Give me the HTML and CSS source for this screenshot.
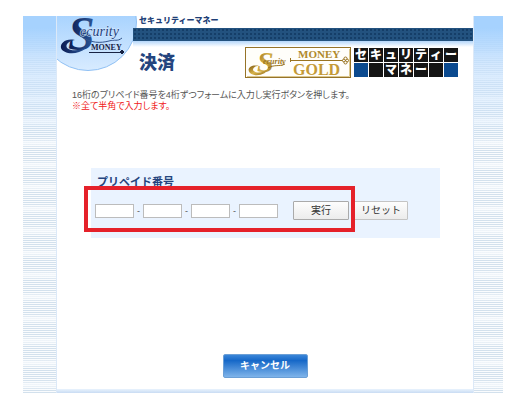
FILE: index.html
```html
<!DOCTYPE html>
<html lang="ja">
<head>
	<meta charset="UTF-8">
	<title>セキュリティーマネー 決済</title>
	<link rel="stylesheet" href="styles.css">
</head>
<body>
<div class="wrap">
	<div class="main">
		<div class="header">
			<svg class="logo" width="80" height="56" viewBox="0 0 80 56" role="img" aria-label="Security MONEY">
				<defs>
					<linearGradient id="disc" x1="0" y1="0" x2="0" y2="1">
						<stop offset="0.4" stop-color="#a6d2fe"/>
						<stop offset="1" stop-color="#d8ebff"/>
					</linearGradient>
					<linearGradient id="navy" x1="0" y1="0" x2="1" y2="0">
						<stop offset="0" stop-color="#0a1a52"/>
						<stop offset="1" stop-color="#2c5a9c"/>
					</linearGradient>
				</defs>
				<circle cx="31" cy="6" r="48.5" fill="url(#disc)" stroke="#8fc0f4"/>
				<text class="logo-s" x="11" y="34">S</text>
				<path d="M18 24C9 22 3 27 4 32C6 38 20 40 29 32C25 34 14 36 10 32C8 28 12 25 18 24Z" fill="url(#navy)"/>
				<path d="M22 19C34 28 44 27 52 25C58 23 60 26 65 22" fill="none" stroke="#33558c"/>
				<text class="logo-name" x="23" y="20">ecurity</text>
				<text class="logo-money" x="34" y="34">MONEY</text>
				<path d="M32 36.5H63" stroke="#182344"/>
				<path d="M63 36H67M65 34V38" stroke="#182344" stroke-width="2"/>
			</svg>
			<div class="head-body">
				<p class="site-name">セキュリティーマネー</p>
				<div class="bar"></div>
				<div class="head-row">
					<h1>決済</h1>
					<svg class="gold" width="106" height="31" viewBox="0 0 106 31" role="img" aria-label="Security MONEY GOLD">
						<defs>
							<linearGradient id="gold" x1="0" y1="0" x2="1" y2="1">
								<stop offset="0" stop-color="#805a10"/>
								<stop offset="0.5" stop-color="#d9b44a"/>
								<stop offset="1" stop-color="#8a6418"/>
							</linearGradient>
						</defs>
						<rect x="0.5" y="0.5" width="105" height="30" fill="#fffefa" stroke="#967328"/>
						<path d="M2 29.5H104.500V2" fill="none" stroke="#dcc88e"/>
						<text class="gold-s" x="12" y="25">S</text>
						<path d="M14 19C6 17 1 22 5 26C11 31 22 27 24 21C19 26 10 27 8 23C8 20 11 19 14 19Z" fill="url(#gold)"/>
						<text class="gold-name" x="18" y="17">ecurity</text>
						<path d="M23 21C30 17 34 20 40 17" fill="none" stroke="#9a7420"/>
						<text class="gold-money" x="53" y="11">MONEY</text>
						<text class="gold-big" x="48" y="28">GOLD</text>
						<path d="M45 13.5H98" stroke="#9a7420"/>
						<path d="M45.500 11V15" stroke="#9a7420"/>
						<circle cx="99" cy="13.5" r="1.5" fill="#fff" stroke="#9a7420"/>
						<circle cx="102" cy="13.5" r="1.5" fill="#fff" stroke="#9a7420"/>
						<circle cx="100.5" cy="11.5" r="1.5" fill="#fff" stroke="#9a7420"/>
						<circle cx="100.5" cy="15.5" r="1.5" fill="#fff" stroke="#9a7420"/>
					</svg>
					<div class="tiles">
						<span>セ</span><span>キ</span><span>ュ</span><span>リ</span><span>テ</span><span>ィ</span><span>ー</span>
						<span class="blue"></span><span></span><span>マ</span><span>ネ</span><span>ー</span><span></span><span class="blue"></span>
					</div>
				</div>
			</div>
		</div>
		<div class="lead">
			<p>16桁のプリペイド番号を4桁ずつフォームに入力し実行ボタンを押します。</p>
			<p class="red">※全て半角で入力します。</p>
		</div>
		<form class="panel">
			<h2>プリペイド番号</h2>
			<div class="fields">
				<input type="text" maxlength="4" aria-label="番号1"><span class="dash">-</span>
				<input type="text" maxlength="4" aria-label="番号2"><span class="dash">-</span>
				<input type="text" maxlength="4" aria-label="番号3"><span class="dash">-</span>
				<input type="text" maxlength="4" aria-label="番号4">
				<button type="button" class="btn run">実行</button>
				<button type="reset" class="btn">リセット</button>
			</div>
			<div class="frame"></div>
		</form>
		<div class="foot">
			<button type="button" class="cancel">キャンセル</button>
		</div>
	</div>
</div>
</body>
</html>
```

FILE: styles.css
```css
*{
	margin: 0;
	padding: 0;
	box-sizing: border-box;
}
body{
	background: #fff;
	font-family: "Liberation Sans", "Noto Sans CJK JP", sans-serif;
	font-size: 9px;
	color: #555;
}
.wrap{
	margin: 16px 16px 22px 23px;
	padding: 0 29px 0 33px;
	background:
		linear-gradient(#a6d2fe 0, #a6d2fe 12px, rgba(200,226,254,.7) 50px, rgba(255,255,255,0) 130px),
		repeating-linear-gradient(rgba(255,255,255,0) 0, rgba(255,255,255,0) 12px, rgba(250,252,254,.8) 17px, rgba(255,255,255,0) 22px),
		repeating-linear-gradient(#d3e1ed 0, #d3e1ed 1px, #fafcfe 1px, #fafcfe 2px);
}
.main{
	background: linear-gradient(#e9f3fd, #c9dcf3) bottom / 100% 4px no-repeat #fff;
	border: 1px solid #dce9f8;
	border-width: 0 1px;
}
.header{
	display: flex;
}
.logo{
	flex: none;
}
.head-body{
	flex: 1;
}
.site-name{
	height: 12px;
	padding-left: 2px;
	font-size: 8px;
	font-weight: 900;
	line-height: 10px;
	color: #1f3f77;
}
.bar{
	height: 19px;
	margin-left: -4px;
	background:
		linear-gradient(#b4d6fa, #fff) bottom / 100% 6px no-repeat,
		radial-gradient(#153e68 1px, #23527f 1px) 0 0 / 4px 4px;
}
.head-row{
	display: flex;
	align-items: flex-start;
	gap: 3px;
	padding: 0 15px 0 2px;
}
h1{
	flex: 1;
	padding-top: 6px;
	font-size: 18px;
	font-weight: 900;
	line-height: 20px;
	color: #24447e;
}
.tiles{
	display: grid;
	grid-template-columns: repeat(7, 14px);
	grid-auto-rows: 14px;
	gap: 1px;
	margin-top: 1px;
	background: #fff;
}
.tiles span{
	background: #151515;
	color: #fff;
	font-size: 12px;
	font-weight: 900;
	line-height: 14px;
	text-align: center;
}
.tiles .blue{
	background: #0b4a8f;
}
.lead{
	padding: 12px 15px 0;
	line-height: 11px;
	font-feature-settings: "palt";
}
.red{
	color: #f01818;
}
.panel{
	position: relative;
	margin: 56px 33px 0 34px;
	padding: 7px 4px 18px;
	background: #eaf3ff;
}
h2{
	padding-left: 2px;
	font-size: 11px;
	line-height: 14px;
	color: #24447e;
}
.fields{
	display: flex;
	align-items: center;
	margin-top: 12px;
}
.fields input{
	width: 39px;
	height: 14px;
	border: 1px solid #bcbcbc;
	background: #fff;
}
.dash{
	width: 9px;
	text-align: center;
}
.btn{
	height: 19px;
	width: 54px;
	border: 1px solid #c4c4c4;
	border-radius: 1px;
	background: linear-gradient(#fdfdfd, #ececec);
	font-family: inherit;
	font-size: 10px;
	line-height: 16px;
	color: #333;
}
.run{
	width: 56px;
	margin: 0 5px 0 15px;
	border-color: #aaa;
}
.frame{
	position: absolute;
	top: 18px;
	left: -7px;
	width: 271px;
	height: 46px;
	border: 4px solid #e5212a;
	pointer-events: none;
}
.foot{
	padding: 116px 0 15px;
	text-align: center;
}
.cancel{
	width: 85px;
	height: 24px;
	border: 1px solid #6b9fd6;
	border-radius: 2px;
	background: linear-gradient(#3a86d8, #1668c8 25%, #7fb4ea);
	font-family: inherit;
	font-size: 10px;
	font-weight: bold;
	line-height: 20px;
	color: #fff;
	vertical-align: top;
}
.logo text,
.gold text{
	font-family: "Liberation Serif", serif;
	font-weight: bold;
}
.logo .logo-s{
	font-size: 48px;
	font-style: italic;
	fill: url(#navy);
}
.logo .logo-name{
	font-size: 14px;
	font-style: italic;
	font-weight: normal;
	fill: #1f3f7c;
	stroke: #d8ebff;
	stroke-width: 1px;
	paint-order: stroke;
}
.logo .logo-money{
	font-size: 8px;
	fill: #182344;
}
.gold .gold-s{
	font-size: 30px;
	font-style: italic;
	fill: url(#gold);
}
.gold .gold-name{
	font-size: 8px;
	font-style: italic;
	fill: #9a7420;
}
.gold .gold-money{
	font-size: 11px;
	fill: #b08a2c;
}
.gold .gold-big{
	font-size: 16px;
	fill: #c49a36;
}
```
